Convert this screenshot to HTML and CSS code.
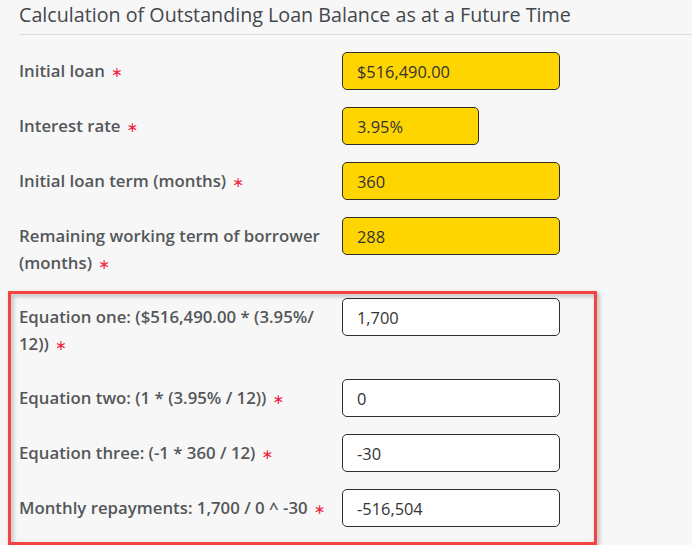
FILE: index.html
```html
<!DOCTYPE html>
<html lang="en">
<head>
<meta charset="utf-8">
<title>Calculation of Outstanding Loan Balance</title>
<link rel="stylesheet" href="styles.css">
</head>
<body>
<div class="page">
  <h1 class="title">Calculation of Outstanding Loan Balance as at a Future Time</h1>
  <div class="form">
    <div class="row">
      <label class="label">Initial loan <span class="req">∗</span></label>
      <input class="field field-yellow" type="text" value="$516,490.00">
    </div>
    <div class="row">
      <label class="label">Interest rate <span class="req">∗</span></label>
      <input class="field field-yellow field-short" type="text" value="3.95%">
    </div>
    <div class="row">
      <label class="label">Initial loan term (months) <span class="req">∗</span></label>
      <input class="field field-yellow" type="text" value="360">
    </div>
    <div class="row">
      <label class="label">Remaining working term of borrower (months) <span class="req">∗</span></label>
      <input class="field field-yellow" type="text" value="288">
    </div>
    <div class="row">
      <label class="label">Equation one: ($516,490.00 * (3.95%/ 12)) <span class="req">∗</span></label>
      <input class="field" type="text" value="1,700">
    </div>
    <div class="row">
      <label class="label">Equation two: (1 * (3.95% / 12)) <span class="req">∗</span></label>
      <input class="field" type="text" value="0">
    </div>
    <div class="row">
      <label class="label">Equation three: (-1 * 360 / 12) <span class="req">∗</span></label>
      <input class="field" type="text" value="-30">
    </div>
    <div class="row">
      <label class="label">Monthly repayments: 1,700 / 0 ^ -30 <span class="req">∗</span></label>
      <input class="field" type="text" value="-516,504">
    </div>
  </div>
  <div class="highlight"></div>
</div>
</body>
</html>
```

FILE: styles.css
```css
html, body {
  margin: 0;
  padding: 0;
  background: #f7f7f7;
}
body {
  font-family: "Open Sans", "Liberation Sans", sans-serif;
}
.page {
  position: relative;
  padding-left: 19px;
  height: 545px;
  overflow: hidden;
}
.title {
  margin: 0;
  padding: 2px 0 6px;
  font-size: 19.7px;
  line-height: 26px;
  font-weight: 400;
  color: #43474b;
  border-bottom: 1px solid #dcdcdc;
}
.form {
  display: flex;
  flex-direction: column;
  padding-top: 17px;
}
.row {
  display: grid;
  grid-template-columns: 323px 218px;
  align-items: start;
  margin-bottom: 17px;
}
.label {
  display: block;
  padding: 5px 10px 5px 0;
  font-size: 16.8px;
  line-height: 27px;
  font-weight: 600;
  color: #54575a;
}
.req {
  font-family: "DejaVu Sans", sans-serif;
  color: #f2243a;
  font-size: 14px;
  line-height: 0;
  font-weight: 400;
  margin-left: 2px;
}
.field {
  box-sizing: border-box;
  width: 218px;
  height: 38px;
  margin: 0;
  padding: 0 14px;
  border: 1px solid #2e2e2e;
  border-radius: 5px;
  background: #fff;
  font-family: "Open Sans", "Liberation Sans", sans-serif;
  font-size: 16.4px;
  color: #333;
  outline: none;
}
.field-yellow {
  background: #ffd500;
}
.field-short {
  width: 137px;
}
.highlight {
  position: absolute;
  left: 8px;
  top: 291px;
  width: 589px;
  height: 254px;
  box-sizing: border-box;
  border: 3px solid #f34343;
  filter: drop-shadow(2px 2px 2px rgba(0, 0, 0, 0.3));
  pointer-events: none;
}
```
